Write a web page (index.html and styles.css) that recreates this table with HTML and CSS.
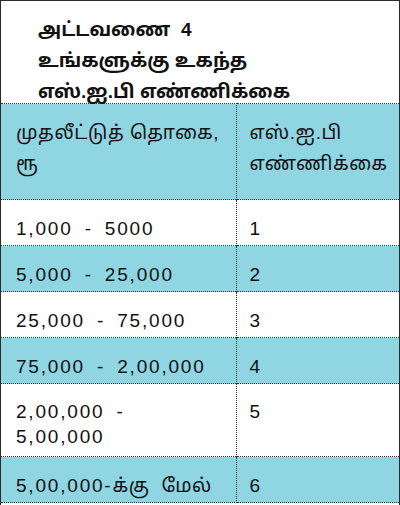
FILE: index.html
```html
<!DOCTYPE html>
<html lang="ta">
<head>
<meta charset="utf-8">
<link rel="stylesheet" href="styles.css">
</head>
<body>
<div class="frame">
  <div class="title">
    <div class="tline">அட்டவணை&nbsp; 4</div>
    <div class="tline">உங்களுக்கு உகந்த</div>
    <div class="tline">எஸ்.ஐ.பி எண்ணிக்கை</div>
  </div>
  <table class="sip">
    <tr class="head">
      <td class="c1">முதலீட்டுத் தொகை,<br>ரூ</td>
      <td class="c2">எஸ்.ஐ.பி<br>எண்ணிக்கை</td>
    </tr>
    <tr class="white"><td class="c1 num">1,000 - 5000</td><td class="c2 num">1</td></tr>
    <tr class="blue"><td class="c1 num">5,000 - 25,000</td><td class="c2 num">2</td></tr>
    <tr class="white"><td class="c1 num">25,000 - 75,000</td><td class="c2 num">3</td></tr>
    <tr class="blue"><td class="c1 num">75,000 - 2,00,000</td><td class="c2 num">4</td></tr>
    <tr class="white tall"><td class="c1 num">2,00,000 -<br>5,00,000</td><td class="c2 num">5</td></tr>
    <tr class="blue last"><td class="c1 num">5,00,000-<span class="ta">க்கு</span> <span class="ta">மேல்</span></td><td class="c2 num">6</td></tr>
  </table>
</div>
</body>
</html>
```
FILE: styles.css
```css
html, body {
  margin: 0;
  padding: 0;
  background: #fff;
}
.frame {
  width: 400px;
  height: 505px;
  box-sizing: border-box;
  border: 1px solid #2a2a2a;
  border-bottom: none;
  font-family: "Liberation Sans", "Noto Sans Tamil", "Lohit Tamil", sans-serif;
  color: #111;
  overflow: hidden;
}
.title {
  height: 102px;
  box-sizing: border-box;
  padding: 13px 0 0 37px;
}
.tline {
  font-size: 19px;
  font-weight: bold;
  line-height: 31px;
}
.sip {
  width: 398px;
  border-collapse: collapse;
  table-layout: fixed;
}
.sip td {
  border-top: 1px dotted #333;
  vertical-align: top;
  font-size: 19px;
  padding: 0;
}
.sip td.c1 {
  width: 235px;
  border-right: 1px dotted #333;
  padding-left: 15px;
}
.sip td.c2 {
  padding-left: 13px;
}
.head td {
  height: 96px;
  background: #8fd5e2;
  line-height: 31px;
  padding-top: 13px;
  box-sizing: border-box;
  letter-spacing: 0.6px;
}
.num {
  letter-spacing: 1.8px;
  word-spacing: 5px;
  line-height: 25px;
}
.ta {
  letter-spacing: 0.5px;
}
.white td, .blue td {
  height: 46px;
  box-sizing: border-box;
  padding-top: 16px;
}
.blue td {
  background: #8fd5e2;
}
.tall td {
  height: 73px;
  padding-top: 15px;
}
.last td {
  border-bottom: 1px dotted #333;
}
```
